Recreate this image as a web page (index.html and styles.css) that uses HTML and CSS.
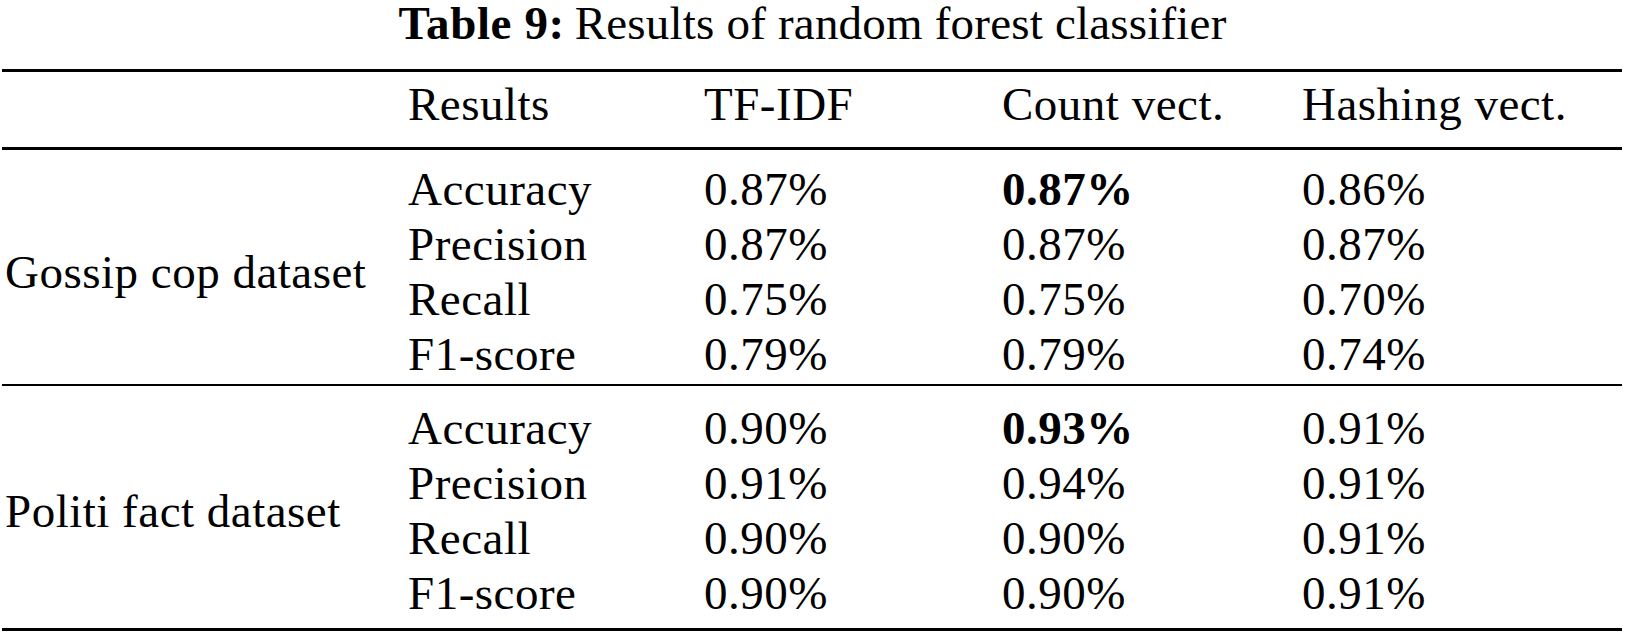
FILE: index.html
```html
<!DOCTYPE html>
<html lang="en">
<head>
<meta charset="utf-8">
<title>Table 9: Results of random forest classifier</title>
<link rel="stylesheet" href="styles.css">
</head>
<body>
<div class="caption"><span class="caption-label">Table 9:</span>Results of random forest classifier</div>
<div class="table">
  <div class="head">
    <div class="cell"></div>
    <div class="cell">Results</div>
    <div class="cell">TF-IDF</div>
    <div class="cell">Count vect.</div>
    <div class="cell">Hashing vect.</div>
  </div>
  <div class="group group-first">
    <div class="label">Gossip cop dataset</div>
    <div class="cell">Accuracy</div><div class="cell">0.87%</div><div class="cell strong">0.87%</div><div class="cell">0.86%</div>
    <div class="cell">Precision</div><div class="cell">0.87%</div><div class="cell">0.87%</div><div class="cell">0.87%</div>
    <div class="cell">Recall</div><div class="cell">0.75%</div><div class="cell">0.75%</div><div class="cell">0.70%</div>
    <div class="cell">F1-score</div><div class="cell">0.79%</div><div class="cell">0.79%</div><div class="cell">0.74%</div>
  </div>
  <div class="group group-last">
    <div class="label">Politi fact dataset</div>
    <div class="cell">Accuracy</div><div class="cell">0.90%</div><div class="cell strong">0.93%</div><div class="cell">0.91%</div>
    <div class="cell">Precision</div><div class="cell">0.91%</div><div class="cell">0.94%</div><div class="cell">0.91%</div>
    <div class="cell">Recall</div><div class="cell">0.90%</div><div class="cell">0.90%</div><div class="cell">0.91%</div>
    <div class="cell">F1-score</div><div class="cell">0.90%</div><div class="cell">0.90%</div><div class="cell">0.91%</div>
  </div>
</div>
</body>
</html>
```
FILE: styles.css
```css
html, body {
  margin: 0;
  padding: 0;
  background: #ffffff;
}

body {
  font-family: "Liberation Serif", "Times New Roman", serif;
  font-size: 47px;
  color: #000000;
}

.caption {
  text-align: center;
  line-height: 46px;
  height: 46px;
  margin-bottom: 23px;
  white-space: nowrap;
  letter-spacing: 0.2px;
}

.caption-label {
  font-weight: bold;
  letter-spacing: 0.6px;
  margin-right: 10px;
}

.table {
  margin: 0 3px 0 2px;
  border-top: 3px solid #000;
  border-bottom: 3px solid #000;
  letter-spacing: 0.5px;
}

.head,
.group {
  display: grid;
  grid-template-columns: 406px 296px 298px 300px 1fr;
  grid-auto-rows: 55px;
  line-height: 55px;
  white-space: nowrap;
}

.head {
  padding: 5px 0 15px;
  border-bottom: 3px solid #000;
}

.group-first {
  padding: 12px 0 2px;
  border-bottom: 2px solid #000;
}

.group-last {
  padding: 15px 0 7px;
}

.label {
  grid-column: 1;
  grid-row: 1 / span 4;
  align-self: center;
  padding-left: 3px;
}

.cell.strong {
  font-weight: bold;
}
```
